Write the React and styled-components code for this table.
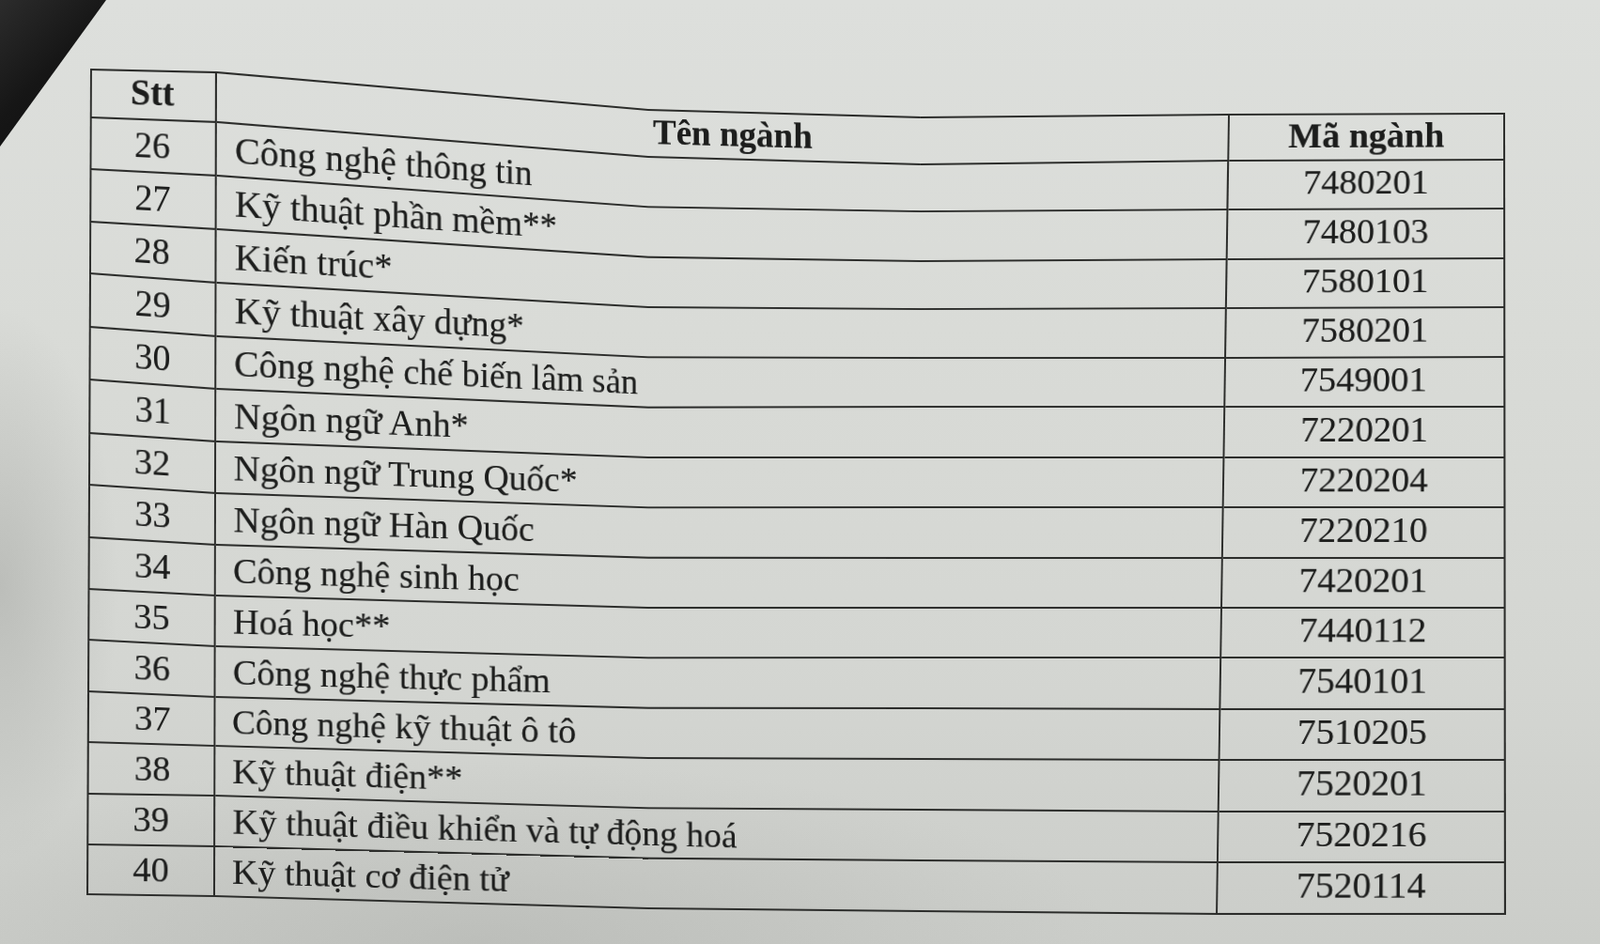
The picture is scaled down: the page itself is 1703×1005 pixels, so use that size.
import React from "react";
import styled, { createGlobalStyle } from "styled-components";

const LINE = "#2c2d2b";
const INK = "#1c1d1c";
const ORIGIN_X = 96;
const ORIGIN_Y = 73;

const COL_W = [135, 459, 290, 329, 293];
const ROW_H = [52, ...Array(15).fill(54)];

const rows = [
  ["26", "Công nghệ thông tin", "7480201"],
  ["27", "Kỹ thuật phần mềm**", "7480103"],
  ["28", "Kiến trúc*", "7580101"],
  ["29", "Kỹ thuật xây dựng*", "7580201"],
  ["30", "Công nghệ chế biến lâm sản", "7549001"],
  ["31", "Ngôn ngữ Anh*", "7220201"],
  ["32", "Ngôn ngữ Trung Quốc*", "7220204"],
  ["33", "Ngôn ngữ Hàn Quốc", "7220210"],
  ["34", "Công nghệ sinh học", "7420201"],
  ["35", "Hoá học**", "7440112"],
  ["36", "Công nghệ thực phẩm", "7540101"],
  ["37", "Công nghệ kỹ thuật ô tô", "7510205"],
  ["38", "Kỹ thuật điện**", "7520201"],
  ["39", "Kỹ thuật điều khiển và tự động hoá", "7520216"],
  ["40", "Kỹ thuật cơ điện tử", "7520114"],
];

/* Where the bent sheet puts the table's grid lines in the photo:
   x of each vertical control line (top, bottom) and y of the 17 ruled lines along it. */
const XT = [96, 231, 690, 980, 1309, 1602];
const XB = [92, 229, 690, 980, 1296, 1603];
const uniform = (a, b, c) => [a, b, ...Array.from({ length: 15 }, (_, i) => b + ((c - b) * (i + 1)) / 15)];
const Y = [
  [73, 126, 181, 237, 292, 349, 405, 462, 517, 573, 628, 682, 737, 791, 846, 900, 953],
  [76, 131, 188, 245, 302, 359, 415, 471, 526, 581, 635, 689, 743, 795, 848, 902, 955],
  uniform(116, 168, 968),
  [124, 176, 226, 279, 330, 382, 434, 488, 541, 595, 648, 701, 755, 809, 863, 917, 971],
  [121, 172, 224, 277, 329, 382, 434, 488, 541, 595, 648, 701, 756, 810, 865, 919, 974],
  [120, 171, 223, 276, 328, 381, 434, 488, 541, 595, 648, 701, 756, 810, 865, 919, 974],
];

function point(c, r) {
  const ys = Y[c];
  const t = (ys[r] - ys[0]) / (ys[16] - ys[0]);
  return [XT[c] + (XB[c] - XT[c]) * t, ys[r]];
}

function perspective(w, h, ox, oy, quad) {
  const [[x0, y0], [x1, y1], [x2, y2], [x3, y3]] = quad.map(([x, y]) => [x - ox, y - oy]);
  const dx1 = x1 - x2, dx2 = x3 - x2, dx3 = x0 - x1 + x2 - x3;
  const dy1 = y1 - y2, dy2 = y3 - y2, dy3 = y0 - y1 + y2 - y3;
  const den = dx1 * dy2 - dx2 * dy1;
  const g = (dx3 * dy2 - dx2 * dy3) / den;
  const k = (dx1 * dy3 - dx3 * dy1) / den;
  const a = x1 - x0 + g * x1, b = x3 - x0 + k * x3, c = x0;
  const d = y1 - y0 + g * y1, e = y3 - y0 + k * y3, f = y0;
  const m = [a / w, d / w, 0, g / w, b / h, e / h, 0, k / h, 0, 0, 1, 0, c, f, 0, 1];
  return `matrix3d(${m.map((v) => +v.toFixed(8)).join(",")})`;
}

function cellTransform(c, r) {
  const ox = ORIGIN_X + COL_W.slice(0, c).reduce((s, v) => s + v, 0);
  const oy = ORIGIN_Y + ROW_H.slice(0, r).reduce((s, v) => s + v, 0);
  const quad = [point(c, r), point(c + 1, r), point(c + 1, r + 1), point(c, r + 1)];
  return perspective(COL_W[c], ROW_H[r], ox, oy, quad);
}

const GlobalStyle = createGlobalStyle`
  html, body { margin: 0; padding: 0; background: #d5d7d3; }
  #root { width: 1703px; height: 1005px; }
`;

const Page = styled.div`
  position: relative;
  width: 1703px;
  height: 1005px;
  overflow: hidden;
  box-sizing: border-box;
  padding: ${ORIGIN_Y}px 0 0 ${ORIGIN_X}px;
  background:
    radial-gradient(ellipse 180px 420px at 0% 62%, rgba(140, 142, 138, 0.35), transparent 70%),
    radial-gradient(ellipse 900px 260px at 30% 100%, rgba(160, 162, 158, 0.35), transparent 75%),
    linear-gradient(180deg, #dddfdc 0%, #d9dbd7 35%, #d4d6d2 70%, #cbcdc9 100%);
`;

const Corner = styled.div`
  position: absolute;
  top: 0;
  left: 0;
  width: 120px;
  height: 160px;
  background: linear-gradient(135deg, #2c2c2c 0%, #161616 45%, #0b0b0b 100%);
  clip-path: polygon(0 0, 113px 0, 0 156px);
`;

const Table = styled.div`
  display: grid;
  grid-template-columns: ${COL_W.map((w) => `${w}px`).join(" ")};
  grid-template-rows: ${ROW_H.map((h) => `${h}px`).join(" ")};
  color: ${INK};
  font-family: "Liberation Serif", "Times New Roman", serif;
  text-shadow: 0 0 0.6px rgba(20, 20, 20, 0.45);
`;

const Cell = styled.div`
  box-sizing: border-box;
  min-width: 0;
  transform-origin: 0 0;
  border-bottom: 2px solid ${LINE};
  border-top: ${(p) => (p.$top ? `2px solid ${LINE}` : "none")};
  border-left: ${(p) => (p.$left ? `2px solid ${LINE}` : "none")};
  border-right: ${(p) => (p.$right ? `2px solid ${LINE}` : "none")};
  display: flex;
  align-items: center;
  justify-content: ${(p) => (p.$align === "left" ? "flex-start" : "center")};
  padding: 0 0 ${(p) => (p.$lift || 0) * 2}px ${(p) => p.$indent || 0}px;
  font-size: ${(p) => p.$size || 38}px;
  font-weight: 400;
  line-height: 1;
  white-space: nowrap;
`;

const HeaderCell = styled(Cell)`
  font-weight: 700;
`;

const BORDER_RIGHT = [true, false, false, true, true];

function GridCell({ c, r, as: Comp = Cell, children, ...rest }) {
  return (
    <Comp
      $top={r === 0}
      $left={c === 0}
      $right={BORDER_RIGHT[c]}
      style={{ transform: cellTransform(c, r) }}
      {...rest}
    >
      {children}
    </Comp>
  );
}

export default function App() {
  return (
    <>
      <GlobalStyle />
      <Page>
        <Corner />
        <Table>
          <GridCell c={0} r={0} as={HeaderCell} $lift={3}>Stt</GridCell>
          <GridCell c={1} r={0} as={HeaderCell} />
          <GridCell c={2} r={0} as={HeaderCell} $align="left" $indent={5} $size={37} $lift={2}>
            Tên ngành
          </GridCell>
          <GridCell c={3} r={0} as={HeaderCell} />
          <GridCell c={4} r={0} as={HeaderCell} $lift={2}>Mã ngành</GridCell>
          {rows.map(([n, name, code], i) => (
            <React.Fragment key={n}>
              <GridCell c={0} r={i + 1} $lift={1.5}>{n}</GridCell>
              <GridCell c={1} r={i + 1} $align="left" $indent={18}>{name}</GridCell>
              <GridCell c={2} r={i + 1} />
              <GridCell c={3} r={i + 1} />
              <GridCell c={4} r={i + 1} $lift={3}>{code}</GridCell>
            </React.Fragment>
          ))}
        </Table>
      </Page>
    </>
  );
}
